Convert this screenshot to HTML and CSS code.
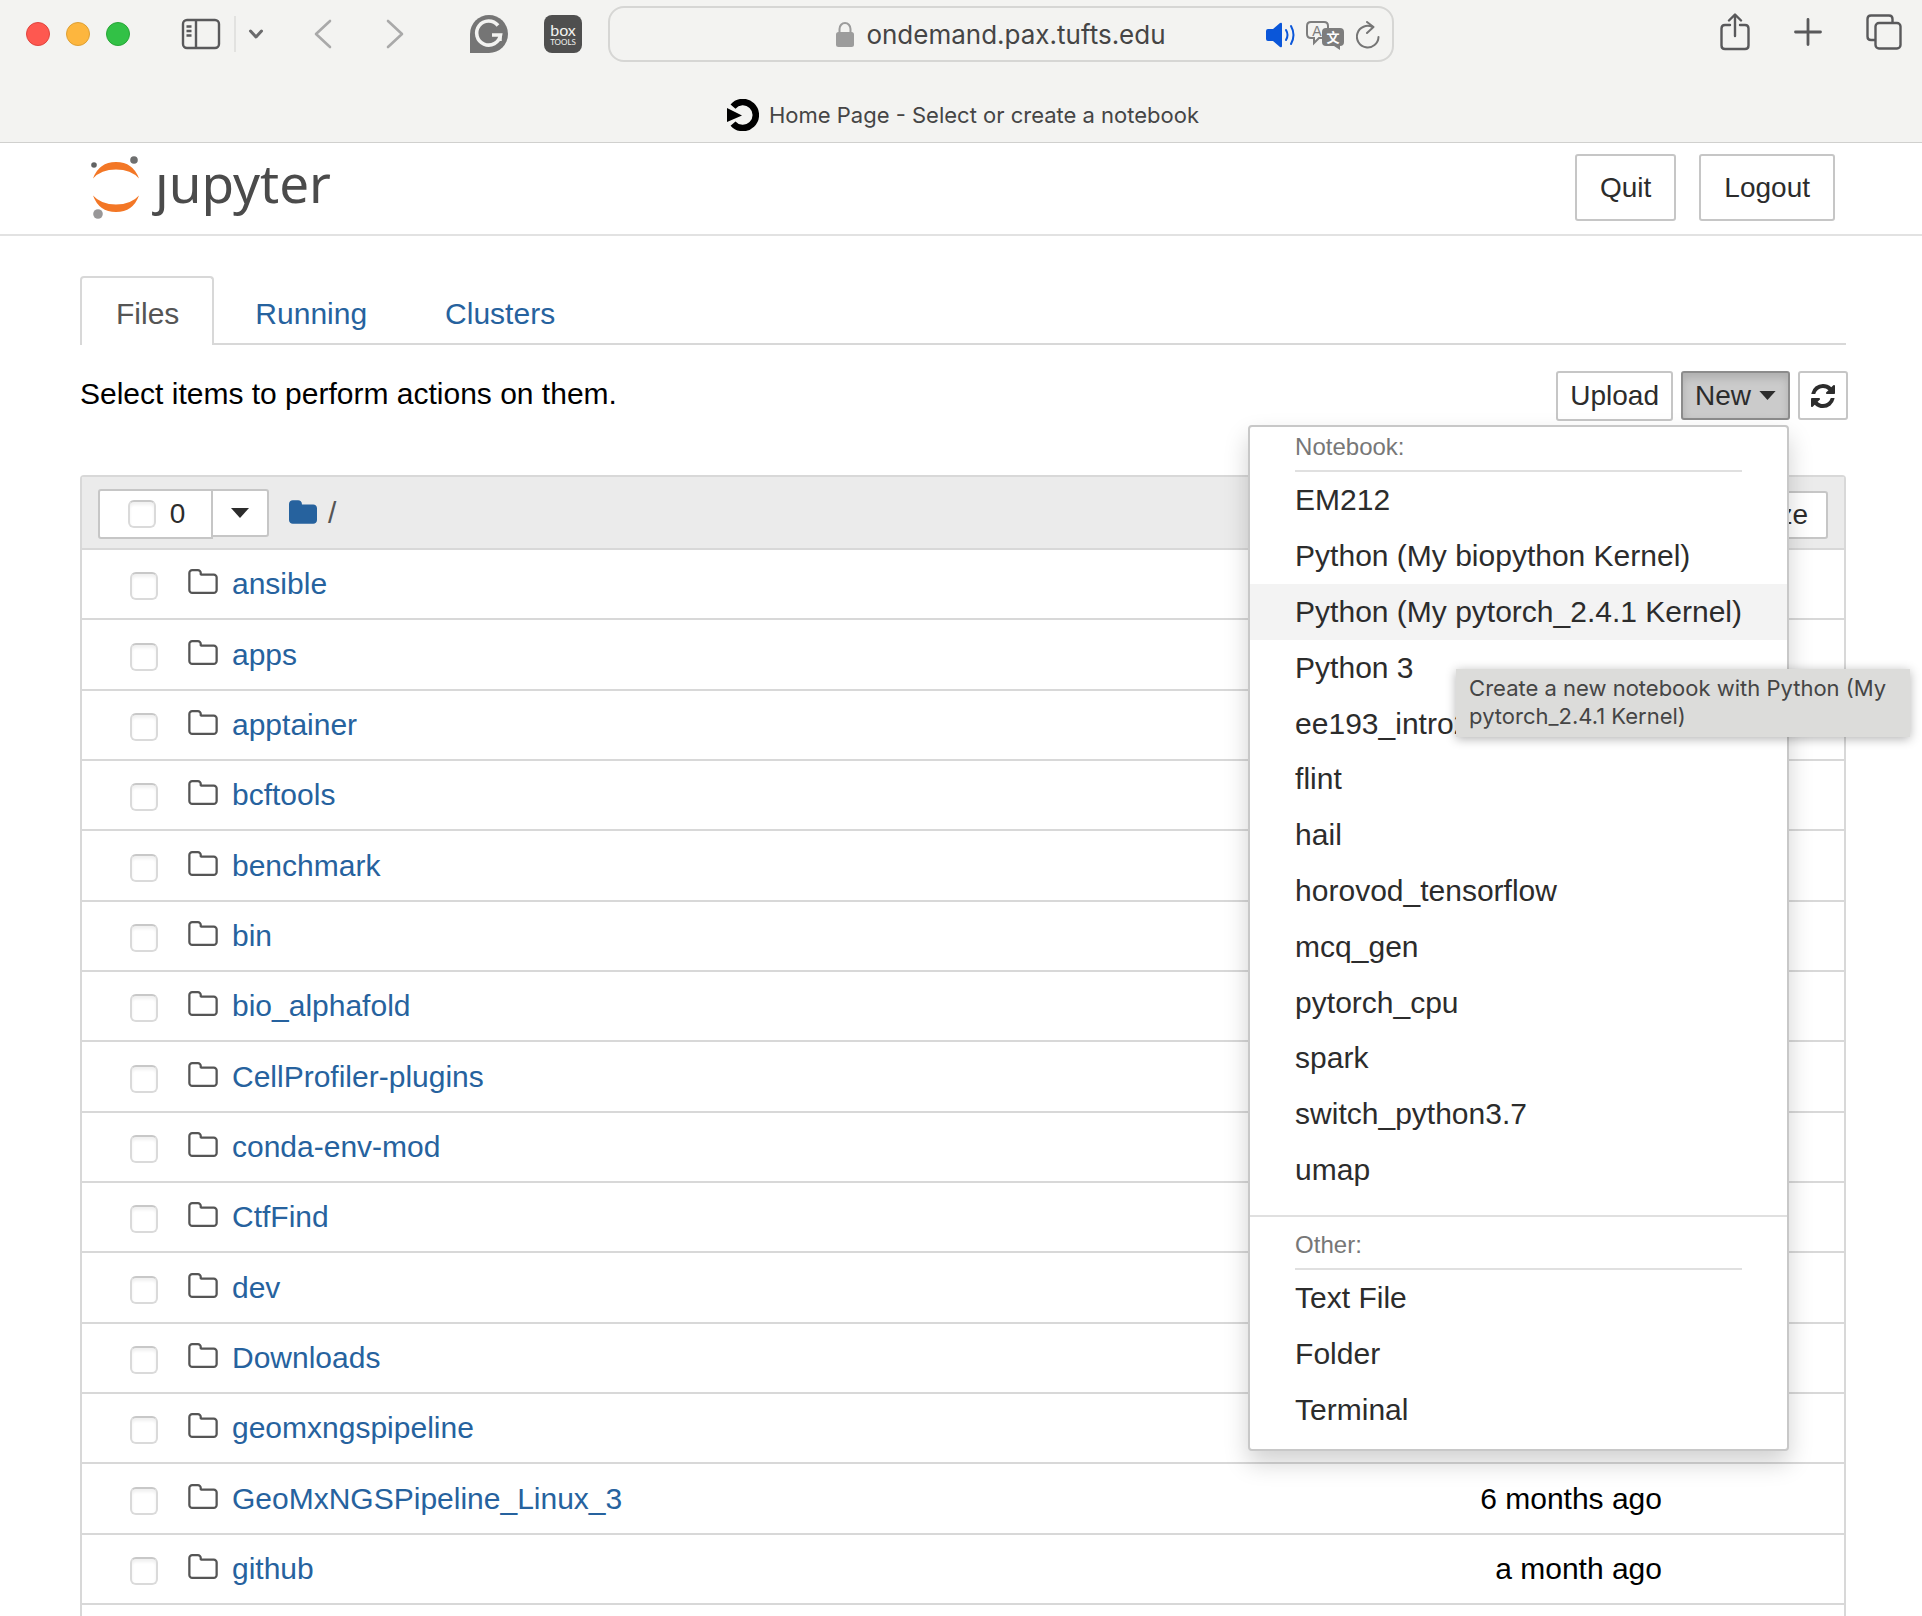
FILE: index.html
```html
<!DOCTYPE html>
<html lang="en">
<head>
<meta charset="utf-8">
<title>Home Page - Select or create a notebook</title>
<link rel="stylesheet" href="styles.css">
</head>
<body>
<svg class="symbols" aria-hidden="true">
  <symbol id="folder-open" viewBox="64 128 1664 1408"><path fill="currentColor" d="M1600 1312v-704q0-40-28-68t-68-28h-704q-40 0-68-28t-28-68v-64q0-40-28-68t-68-28h-320q-40 0-68 28t-28 68v960q0 40 28 68t68 28h1216q40 0 68-28t28-68zm128-704v704q0 92-66 158t-158 66h-1216q-92 0-158-66t-66-158v-960q0-92 66-158t158-66h320q92 0 158 66t66 158v32h672q92 0 158 66t66 158z"/></symbol>
  <symbol id="folder" viewBox="64 128 1664 1408"><path fill="currentColor" d="M1728 608v704q0 92-66 158t-158 66h-1216q-92 0-158-66t-66-158v-960q0-92 66-158t158-66h320q92 0 158 66t66 158v32h672q92 0 158 66t66 158z"/></symbol>
  <symbol id="caret" viewBox="0 0 18 10"><path fill="currentColor" d="M0 0h18L9 10z"/></symbol>
</svg>

<div class="browser">
  <div class="toolbar">
    <div class="toolbar-left">
      <div class="lights"><span class="light red"></span><span class="light yellow"></span><span class="light green"></span></div>
      <button class="tool sidebar" aria-label="Sidebar">
        <svg width="40" height="32" viewBox="0 0 40 32" fill="none" stroke="#59595b" stroke-width="2.4"><rect x="2" y="2" width="36" height="28" rx="4"/><path d="M15 2v28M5.500 8.500h5M5.500 13h5M5.500 17.500h5"/></svg>
      </button>
      <span class="divider"></span>
      <button class="tool chevron" aria-label="Tab groups">
        <svg width="16" height="12" viewBox="0 0 16 12" fill="none" stroke="#6a6a6c" stroke-width="3" stroke-linecap="round" stroke-linejoin="round"><path d="M2.500 3L8 9l5.500-6"/></svg>
      </button>
      <button class="tool back" aria-label="Back">
        <svg width="18" height="30" viewBox="0 0 18 30" fill="none" stroke="#a9a9a9" stroke-width="2.600" stroke-linecap="round" stroke-linejoin="round"><path d="M16 2L2 15l14 13"/></svg>
      </button>
      <button class="tool forward" aria-label="Forward">
        <svg width="18" height="30" viewBox="0 0 18 30" fill="none" stroke="#a9a9a9" stroke-width="2.600" stroke-linecap="round" stroke-linejoin="round"><path d="M2 2l14 13L2 28"/></svg>
      </button>
      <button class="tool grammar" aria-label="Grammar">
        <svg width="38" height="38" viewBox="0 0 38 38"><path fill="#757575" d="M19 0a19 19 0 1 1 0 38H0V19A19 19 0 0 1 19 0z"/><path fill="none" stroke="#f3f3f1" stroke-width="3.600" d="M28 10.500A12 12 0 1 0 30.500 20H22"/><path fill="none" stroke="#f3f3f1" stroke-width="2.500" d="M30.500 26v-6.500"/></svg>
      </button>
      <button class="tool box" aria-label="Box Tools"><span class="box-name">box</span><span class="box-sub">TOOLS</span></button>
    </div>
    <div class="address">
      <span class="address-text">
        <svg width="18" height="26" viewBox="0 0 18 26"><rect x="0" y="10" width="18" height="15" rx="2.500" fill="#9c9c9c"/><path fill="none" stroke="#9c9c9c" stroke-width="2" d="M3.500 11V7a5.500 6 0 0 1 11 0v4"/></svg>
        <span>ondemand.pax.tufts.edu</span>
      </span>
      <span class="address-icons">
        <svg width="29" height="26" viewBox="0 0 29 26"><path fill="#0a56d9" d="M2 7h5l7-6q2-1 2 1v22q0 2-2 1l-7-6H2q-2 0-2-2V9q0-2 2-2z"/><path fill="none" stroke="#0a56d9" stroke-width="2" stroke-linecap="round" d="M20 8q3 5 0 10M25 4q5 9 0 18"/></svg>
        <svg width="39" height="29" viewBox="0 0 39 29"><path fill="none" stroke="#7d7d7d" stroke-width="2" d="M16 17h-3l-5 5v-5H5q-4 0-4-4V5q0-4 4-4h13q4 0 4 4v2"/><rect x="16" y="7" width="22" height="18" rx="4" fill="#7d7d7d"/><path fill="#7d7d7d" d="M25 23h9v6z"/><text x="11" y="15" class="glyph-a">A</text><text x="27" y="21" class="glyph-zh">文</text></svg>
        <svg width="24" height="28" viewBox="0 0 24 28" fill="none" stroke="#757575" stroke-width="2" stroke-linecap="round" stroke-linejoin="round"><path d="M22.500 16A10.800 10.800 0 1 1 16.500 6"/><path d="M11 1l6.500 5L11 12"/></svg>
      </span>
    </div>
    <div class="toolbar-right">
      <button class="tool" aria-label="Share">
        <svg width="30" height="38" viewBox="0 0 30 38" fill="none" stroke="#59595b" stroke-width="2.400" stroke-linecap="round" stroke-linejoin="round"><path d="M10 12H5q-3.500 0-3.500 3.500v17Q1.500 36 5 36h20q3.500 0 3.500-3.500v-17Q28.500 12 25 12h-5M15 23V2M9 7.500L15 1.500l6 6"/></svg>
      </button>
      <button class="tool" aria-label="New tab">
        <svg width="28" height="28" viewBox="0 0 28 28" stroke="#59595b" stroke-width="2.800" stroke-linecap="round"><path d="M14 1.500v25M1.500 14h25"/></svg>
      </button>
      <button class="tool" aria-label="Tab overview">
        <svg width="36" height="36" viewBox="0 0 36 36" fill="none" stroke="#59595b" stroke-width="2.400"><path d="M9.500 26H5q-3.500 0-3.500-3.500V5Q1.500 1.500 5 1.500h18Q26.500 1.500 26.500 5v4"/><rect x="9.500" y="9" width="25" height="25.500" rx="3.500"/></svg>
      </button>
    </div>
  </div>
  <div class="page-tab">
    <svg width="32" height="32" viewBox="0 0 32 32"><path fill="none" stroke="#000" stroke-width="6.500" d="M6 7.500A13 13 0 1 1 6 24.500"/><path d="M0 9l15 7.500L0 23z"/></svg>
    <span>Home Page - Select or create a notebook</span>
  </div>
</div>

<header class="header">
  <a class="logo" href="#" aria-label="Jupyter home">
    <svg width="50" height="64" viewBox="0 0 50 64"><path fill="#f37726" d="M2 22.500Q8 6 25 6t23 16.500Q40 13.500 25 13.500T2 22.500zM2 39.500Q8 56 25 56t23-16.500Q40 48.500 25 48.500T2 39.500z"/><circle cx="3" cy="9" r="2.800" fill="#616262"/><circle cx="43" cy="4" r="3.800" fill="#6e6f6f"/><circle cx="7" cy="58" r="4.800" fill="#989798"/></svg>
    <span>ȷupyter</span>
  </a>
  <div class="header-actions">
    <button class="btn large">Quit</button>
    <button class="btn large">Logout</button>
  </div>
</header>

<main class="content">
  <nav class="tabs">
    <a class="tab active" href="#">Files</a>
    <a class="tab" href="#">Running</a>
    <a class="tab" href="#">Clusters</a>
  </nav>

  <div class="actions">
    <p class="hint">Select items to perform actions on them.</p>
    <div class="buttons">
      <button class="btn upload">Upload</button>
      <div class="new">
        <button class="btn new-btn" aria-expanded="true">New <svg width="17" height="9"><use href="#caret"/></svg></button>
        <div class="menu">
          <h2 class="menu-title">Notebook:</h2>
          <ul class="menu-list">
            <li><a href="#">EM212</a></li>
            <li><a href="#">Python (My biopython Kernel)</a></li>
            <li class="hovered"><a href="#">Python (My pytorch_2.4.1 Kernel)</a>
              <div class="tooltip" role="tooltip">Create a new notebook with Python (My pytorch_2.4.1 Kernel)</div></li>
            <li><a href="#">Python 3</a></li>
            <li><a href="#">ee193_intro2</a></li>
            <li><a href="#">flint</a></li>
            <li><a href="#">hail</a></li>
            <li><a href="#">horovod_tensorflow</a></li>
            <li><a href="#">mcq_gen</a></li>
            <li><a href="#">pytorch_cpu</a></li>
            <li><a href="#">spark</a></li>
            <li><a href="#">switch_python3.7</a></li>
            <li><a href="#">umap</a></li>
          </ul>
          <hr class="menu-rule">
          <h2 class="menu-title">Other:</h2>
          <ul class="menu-list">
            <li><a href="#">Text File</a></li>
            <li><a href="#">Folder</a></li>
            <li><a href="#">Terminal</a></li>
          </ul>
        </div>
      </div>
      <button class="btn refresh" aria-label="Refresh">
        <svg width="24" height="24" viewBox="128 128 1536 1536"><path fill="currentColor" d="M1639 1056q0 5-1 7-64 268-268 434.500t-478 166.500q-146 0-282.500-55t-243.500-157l-129 129q-19 19-45 19t-45-19-19-45v-448q0-26 19-45t45-19h448q26 0 45 19t19 45-19 45l-137 137q71 66 161 102t187 36q134 0 250-65t186-179q11-17 53-117 8-23 30-23h192q13 0 22.500 9.500t9.500 22.500zm25-800v448q0 26-19 45t-45 19h-448q-26 0-45-19t-19-45 19-45l138-138q-148-137-349-137-134 0-250 65t-186 179q-11 17-53 117-8 23-30 23h-199q-13 0-22.500-9.500t-9.500-22.500v-7q65-268 270-434.500t480-166.500q146 0 284 55.500t245 156.500l130-129q19-19 45-19t45 19 19 45z"/></svg>
      </button>
    </div>
  </div>

  <section class="files">
    <div class="files-head">
      <div class="select-group">
        <label class="btn select-all"><input type="checkbox" class="check"><span>0</span></label>
        <button class="btn select-more" aria-label="Selection options"><svg width="18" height="10"><use href="#caret"/></svg></button>
      </div>
      <a class="root" href="#" aria-label="Root folder"><svg width="28" height="24"><use href="#folder"/></svg></a>
      <span class="slash">/</span>
      <button class="btn sort">File size</button>
    </div>
    <table class="list">
      <tbody>
        <tr><td class="pick"><input type="checkbox" class="check" aria-label="ansible"></td><td class="name"><svg width="30" height="25"><use href="#folder-open"/></svg><a href="#">ansible</a></td><td class="date"></td></tr>
        <tr><td class="pick"><input type="checkbox" class="check" aria-label="apps"></td><td class="name"><svg width="30" height="25"><use href="#folder-open"/></svg><a href="#">apps</a></td><td class="date"></td></tr>
        <tr><td class="pick"><input type="checkbox" class="check" aria-label="apptainer"></td><td class="name"><svg width="30" height="25"><use href="#folder-open"/></svg><a href="#">apptainer</a></td><td class="date"></td></tr>
        <tr><td class="pick"><input type="checkbox" class="check" aria-label="bcftools"></td><td class="name"><svg width="30" height="25"><use href="#folder-open"/></svg><a href="#">bcftools</a></td><td class="date"></td></tr>
        <tr><td class="pick"><input type="checkbox" class="check" aria-label="benchmark"></td><td class="name"><svg width="30" height="25"><use href="#folder-open"/></svg><a href="#">benchmark</a></td><td class="date"></td></tr>
        <tr><td class="pick"><input type="checkbox" class="check" aria-label="bin"></td><td class="name"><svg width="30" height="25"><use href="#folder-open"/></svg><a href="#">bin</a></td><td class="date"></td></tr>
        <tr><td class="pick"><input type="checkbox" class="check" aria-label="bio_alphafold"></td><td class="name"><svg width="30" height="25"><use href="#folder-open"/></svg><a href="#">bio_alphafold</a></td><td class="date"></td></tr>
        <tr><td class="pick"><input type="checkbox" class="check" aria-label="CellProfiler-plugins"></td><td class="name"><svg width="30" height="25"><use href="#folder-open"/></svg><a href="#">CellProfiler-plugins</a></td><td class="date"></td></tr>
        <tr><td class="pick"><input type="checkbox" class="check" aria-label="conda-env-mod"></td><td class="name"><svg width="30" height="25"><use href="#folder-open"/></svg><a href="#">conda-env-mod</a></td><td class="date"></td></tr>
        <tr><td class="pick"><input type="checkbox" class="check" aria-label="CtfFind"></td><td class="name"><svg width="30" height="25"><use href="#folder-open"/></svg><a href="#">CtfFind</a></td><td class="date"></td></tr>
        <tr><td class="pick"><input type="checkbox" class="check" aria-label="dev"></td><td class="name"><svg width="30" height="25"><use href="#folder-open"/></svg><a href="#">dev</a></td><td class="date"></td></tr>
        <tr><td class="pick"><input type="checkbox" class="check" aria-label="Downloads"></td><td class="name"><svg width="30" height="25"><use href="#folder-open"/></svg><a href="#">Downloads</a></td><td class="date"></td></tr>
        <tr><td class="pick"><input type="checkbox" class="check" aria-label="geomxngspipeline"></td><td class="name"><svg width="30" height="25"><use href="#folder-open"/></svg><a href="#">geomxngspipeline</a></td><td class="date"></td></tr>
        <tr><td class="pick"><input type="checkbox" class="check" aria-label="GeoMxNGSPipeline_Linux_3"></td><td class="name"><svg width="30" height="25"><use href="#folder-open"/></svg><a href="#">GeoMxNGSPipeline_Linux_3</a></td><td class="date">6 months ago</td></tr>
        <tr><td class="pick"><input type="checkbox" class="check" aria-label="github"></td><td class="name"><svg width="30" height="25"><use href="#folder-open"/></svg><a href="#">github</a></td><td class="date">a month ago</td></tr>
      </tbody>
    </table>
  </section>
</main>
</body>
</html>
```
FILE: styles.css
```css
* {
  box-sizing: border-box;
}

html {
  height: 100%;
  overflow: hidden;
}

body {
  margin: 0;
  height: 100%;
  display: flex;
  flex-direction: column;
  background: #fff;
  color: #000;
  font-family: "Liberation Sans", Arial, sans-serif;
  font-size: 30px;
  line-height: 40px;
}

.symbols {
  display: none;
}

svg {
  display: block;
  flex: none;
}

a {
  color: #26629e;
  text-decoration: none;
}

button {
  font: inherit;
}

/* Browser window */
.browser {
  flex: none;
  height: 143px;
  background: #f3f3f1;
  border-bottom: 1px solid #d0d0ce;
  font-family: Inter, sans-serif;
  color: #454545;
}

.toolbar {
  display: grid;
  grid-template-columns: 608px minmax(300px, 1fr) 528px;
  height: 68px;
}

.toolbar-left,
.toolbar-right {
  display: flex;
  align-items: center;
}

.toolbar-left {
  padding-left: 26px;
}

.toolbar-right {
  justify-content: flex-end;
  gap: 44px;
  padding: 0 20px 4px 0;
}

.lights {
  display: flex;
  gap: 16px;
}

.light {
  width: 24px;
  height: 24px;
  border-radius: 50%;
}

.red {
  background: #fe5850;
  border: 1px solid #e0443e;
}

.yellow {
  background: #fdb63e;
  border: 1px solid #dea034;
}

.green {
  background: #32c146;
  border: 1px solid #27a637;
}

.tool {
  flex: none;
  padding: 0;
  border: 0;
  background: none;
}

.sidebar {
  margin-left: 51px;
}

.divider {
  width: 2px;
  height: 36px;
  margin: 0 12px 0 13px;
  background: #e2e2e0;
}

.back {
  margin-left: 50px;
}

.forward {
  margin-left: 54px;
}

.grammar {
  margin-left: 66px;
}

.box {
  display: flex;
  flex-direction: column;
  align-items: center;
  width: 38px;
  height: 38px;
  margin-left: 36px;
  padding-top: 8px;
  border-radius: 8px;
  background: #4f4f4f;
  color: #f3f3f1;
}

.box-name {
  font: 16px/14px Lato, sans-serif;
}

.box-sub {
  font: 8px/10px Lato, sans-serif;
}

.address {
  display: grid;
  grid-template-columns: 126px 1fr 126px;
  align-items: center;
  height: 56px;
  margin-top: 6px;
  padding-top: 2px;
  border: 2px solid #d6d6d4;
  border-radius: 16px;
  font-size: 26px;
}

.address-text {
  grid-column: 2;
  display: flex;
  align-items: center;
  justify-content: center;
  gap: 12px;
}

.address-icons {
  display: flex;
  align-items: center;
  gap: 11px;
}

.glyph-a {
  font: 14px "Liberation Sans", sans-serif;
  fill: #7d7d7d;
  text-anchor: middle;
}

.glyph-zh {
  font: bold 13px "Noto Sans CJK SC", sans-serif;
  fill: #fff;
  text-anchor: middle;
}

.page-tab {
  display: flex;
  align-items: center;
  justify-content: center;
  gap: 10px;
  height: 74px;
  padding: 20px 0 0 4px;
  font-size: 22px;
}

/* Jupyter header */
.header {
  flex: none;
  display: flex;
  align-items: flex-start;
  justify-content: space-between;
  height: 93px;
  padding: 11px 87px 0 91px;
  border-bottom: 2px solid #e2e2e2;
}

.logo {
  display: flex;
  align-items: flex-end;
  gap: 14px;
  height: 66px;
  color: #4b4b4b;
  font-family: "Noto Sans", sans-serif;
  font-size: 53px;
  line-height: 74px;
}

.header-actions {
  display: flex;
  gap: 23px;
}

.btn {
  display: flex;
  align-items: center;
  justify-content: center;
  padding: 0 12px;
  border: 2px solid #c6c6c6;
  border-radius: 3px;
  background: #fff;
  color: #2c2c2c;
  font-size: 28px;
  line-height: 40px;
}

.btn.large {
  height: 67px;
  padding: 0 23px;
}

/* Page */
.content {
  flex: 1;
  display: flex;
  flex-direction: column;
  min-height: 0;
  padding: 40px 76px 0 80px;
}

.tabs {
  flex: none;
  display: flex;
  gap: 4px;
  height: 69px;
  border-bottom: 2px solid #d8d8d8;
}

.tab {
  height: 69px;
  padding: 16px 35px 0;
  border: 2px solid transparent;
  border-bottom: 0;
}

.tab.active {
  padding: 16px 33px 0 34px;
  border: 2px solid #d8d8d8;
  border-bottom: 0;
  border-radius: 4px 4px 0 0;
  background: #fff;
  color: #555;
}

.actions {
  flex: none;
  display: flex;
  justify-content: space-between;
  align-items: flex-start;
  height: 130px;
  padding-top: 26px;
}

.hint {
  margin: 3px 0 0;
}

.buttons {
  display: flex;
  align-items: flex-start;
  gap: 8px;
  margin-right: -2px;
}

.upload {
  height: 50px;
}

.new {
  position: relative;
}

.new-btn {
  gap: 8px;
  height: 49px;
  border-color: #8c8c8c;
  background: #cbcbcb;
  box-shadow: inset 0 5px 8px rgba(0, 0, 0, 0.14);
}

.refresh {
  width: 50px;
  height: 49px;
  padding: 0;
}

.menu {
  position: absolute;
  z-index: 2;
  top: 54px;
  right: 1px;
  padding-bottom: 11px;
  border: 2px solid #c8c8c8;
  border-radius: 4px;
  background: #fff;
  box-shadow: 0 12px 24px rgba(0, 0, 0, 0.18);
  white-space: nowrap;
}

.menu-title {
  margin: 0 45px;
  height: 45px;
  border-bottom: 2px solid #e0e0e0;
  color: #777;
  font-size: 24px;
  font-weight: normal;
  line-height: 40px;
}

.menu-list {
  margin: 0;
  padding: 0;
  list-style: none;
}

.menu-list li {
  position: relative;
  height: 56px;
  padding: 8px 45px;
}

.menu-list li:nth-child(5n) {
  height: 55px;
}

.menu-list a {
  color: #2c2c2c;
}

.hovered {
  background: #f3f3f3;
}

.menu-rule {
  height: 2px;
  margin: 17px 0 8px;
  border: 0;
  background: #e0e0e0;
}

.tooltip {
  position: absolute;
  z-index: 3;
  top: 85px;
  left: 206px;
  width: 454px;
  height: 68px;
  padding: 5px 13px;
  background: #dcdcda;
  box-shadow: 0 2px 10px rgba(0, 0, 0, 0.3);
  color: #454545;
  font: 22px/28px Inter, sans-serif;
  white-space: normal;
}

/* File list */
.files {
  flex: 1;
  min-height: 0;
  border: 2px solid #d8d8d8;
  border-bottom: 0;
  border-radius: 4px 4px 0 0;
}

.files-head {
  display: flex;
  align-items: flex-start;
  height: 73px;
  padding: 12px 16px 0;
  border-bottom: 2px solid #d8d8d8;
  background: #ebebeb;
}

.select-group {
  display: flex;
  align-items: flex-start;
}

.select-all {
  gap: 14px;
  width: 115px;
  height: 50px;
  padding: 0 0 0 2px;
  border-radius: 3px 0 0 3px;
}

.select-more {
  width: 58px;
  height: 48px;
  margin-left: -2px;
  border-radius: 0 3px 3px 0;
}

.check {
  appearance: none;
  width: 28px;
  height: 28px;
  margin: 0;
  border: 2px solid #dadada;
  border-top-color: #c8c8c8;
  border-radius: 6px;
  background: #fff;
  box-shadow: inset 0 3px 3px rgba(0, 0, 0, 0.06);
}

.root {
  margin: 11px 11px 0 20px;
}

.slash {
  margin-top: 4px;
  color: #555;
}

.sort {
  height: 48px;
  margin: 2px 0 0 auto;
  padding: 0 18px;
}

.list {
  width: 100%;
  border-collapse: separate;
  border-spacing: 0;
}

.list tr {
  height: 70px;
}

.list tr:nth-child(3n + 2) {
  height: 71px;
}

.list td {
  padding: 0;
  border-bottom: 2px solid #d8d8d8;
}

.pick {
  width: 106px;
}

.pick .check {
  display: block;
  margin: 4px 0 0 48px;
}

.name svg {
  float: left;
  margin: 5px 14px 0 0;
  color: #555;
}

.date {
  width: 400px;
}

.list .date {
  padding-right: 182px;
  text-align: right;
}
```
